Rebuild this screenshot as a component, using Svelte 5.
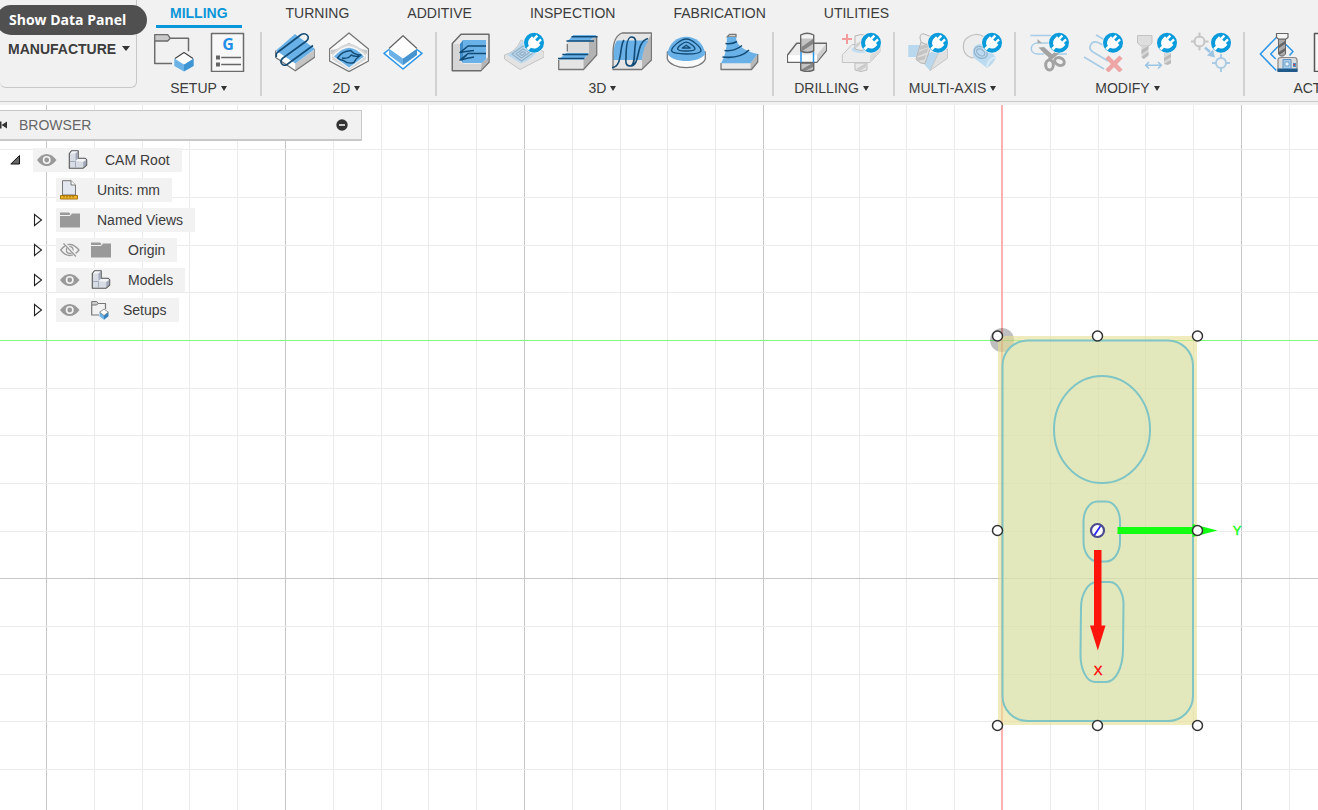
<script>
  const tabs = ['MILLING', 'TURNING', 'ADDITIVE', 'INSPECTION', 'FABRICATION', 'UTILITIES'];
  let activeTab = $state('MILLING');

  const groups = [
    { label: 'SETUP', tools: ['New Setup', 'NC Program'] },
    { label: '2D', tools: ['Face', '2D Adaptive', '2D Contour'] },
    { label: '3D', tools: ['Pocket Clearing', 'Steep and Shallow', 'Flat', 'Parallel', 'Scallop', 'Ramp'] },
    { label: 'DRILLING', tools: ['Drill', 'Hole Recognition'] },
    { label: 'MULTI-AXIS', tools: ['Swarf', 'Rotary'] },
    { label: 'MODIFY', tools: ['Trim', 'Delete Passes', 'Replace Tool', 'Move Entry'] },
    { label: 'ACTIONS', tools: ['Simulate', 'Post Process', 'Setup Sheet'] }
  ];

  const nodes = [
    { label: 'CAM Root', root: true, toggle: 'open', icons: ['eye', 'body'] },
    { label: 'Units: mm', icons: ['units'] },
    { label: 'Named Views', toggle: 'closed', icons: ['folder'] },
    { label: 'Origin', toggle: 'closed', icons: ['hidden', 'folder'] },
    { label: 'Models', toggle: 'closed', icons: ['eye', 'body'] },
    { label: 'Setups', toggle: 'closed', icons: ['eye', 'setups'] }
  ];

  // Grid lines are measured in cells from the work origin.
  const line = (index, cell) => Math.round(index * cell) + 0.5;
  const columns = Array.from({ length: 62 }, (_, i) => i - 41);
  const rows = Array.from({ length: 40 }, (_, i) => i - 5);
  const handles = [
    [-4.5, -4], [95.5, -4], [195.5, -4],
    [-4.5, 190.5], [195.5, 190.5],
    [-4.5, 385.5], [95.5, 385.5], [195.5, 385.5]
  ];
</script>

{#snippet plug()}
  <circle cx="30" cy="10.7" r="10.6" fill="#f1f1f1" />
  <circle cx="30" cy="10.7" r="10" fill="#0a9bdc" />
  <g transform="translate(29.500 11.200) rotate(45)" fill="#fff">
    <rect x="-3.8" y="-8" width="2.4" height="5.500" />
    <rect x="1.4" y="-8" width="2.4" height="5.500" />
    <path d="M-6-3.800h12v2.300c0 3.800-2.300 6-4.500 6.500v3.700h-3v-3.700c-2.200-.500-4.500-2.700-4.500-6.500z" />
  </g>
{/snippet}

{#snippet crosshair(x, y, color)}
  <g transform="translate({x} {y})" fill="none" stroke={color} stroke-width="2">
    <circle r="5" />
    <path d="M0-9v5M0 4v5M-9 0h5M4 0h5" />
  </g>
{/snippet}

{#snippet toolIcon(name)}
  <svg viewBox="0 0 40 40" width="40" height="40" aria-hidden="true" stroke-linejoin="round">
    {#if name === 'New Setup'}
      <path d="M.7 9v22.500H18M16 6.300h18.500v13" fill="none" stroke="#6b6b6b" stroke-width="1.500" />
      <path d="M.7 2.700h13l2.600 3.600L13.700 9H.7z" fill="#c9c9c9" stroke="#6b6b6b" stroke-width="1.300" />
      <path d="M20.300 26.500 30 32.500v7l-9.700-5.500z" fill="#6bb2e6" />
      <path d="M39.700 26.500 30 32.500v7l9.700-5.500z" fill="#3f95d3" />
      <path d="M30 20.500l9 6-9 5.800-9-5.800z" fill="#fff" />
      <path d="M21 26.500l9-6 9 6" fill="none" stroke="#444" stroke-width="1.200" />
    {:else if name === 'NC Program'}
      <rect x="3.500" y="1.500" width="32" height="38" fill="#f8f8f8" stroke="#6b6b6b" stroke-width="1.500" />
      <text x="20" y="18" text-anchor="middle" font-family="Open Sans, sans-serif" font-weight="700" font-size="16" fill="#1f8fe8">G</text>
      <path d="M13.200 25.500H33M13.200 32.500H33" stroke="#666" stroke-width="1.500" />
      <path d="M8 23.500h4v4H8zM8 30.500h4v4H8z" fill="#666" />
    {:else if name === 'Face'}
      <path d="M.7 18.500 20.300 31.500v7.800L.7 25.500z" fill="#fff" />
      <path d="M40 17.500 20.300 31.500v7.800L40 25z" fill="#c4c4c4" />
      <path d="M.7 18.500v7l19.600 13.300L40 25v-8" fill="none" stroke="#777" stroke-width="1.300" />
      <path d="M1 18.500 20 2l20 15-19.700 14.500z" fill="#6ab1e7" />
      <path d="M1.300 25V22.500Q1.300 21 3 20L25.500 3C31-.5 36 5 31.500 9L8 26c-4.500 3.500-.5 9.500 4 6.500L38 13.500" fill="none" stroke="#124b75" stroke-width="1.600" />
    {:else if name === '2D Adaptive'}
      <path d="M20 1 39.500 17v12L20 39.500.5 29V17z" fill="#fafafa" stroke="#777" stroke-width="1.400" />
      <path d="M2 18Q11 17 20 10.500q9 6.500 18 7.500v4Q27 20 20 14q-7 6-18 8z" fill="#c8c8c8" />
      <path d="M20 11.500q7 0 17 10v6L20 38 3 27.500v-6q10-10 17-10z" fill="#d8d8d8" />
      <path d="M20 14q7 0 17 10L20 37 3 24q10-10 17-10z" fill="#f6f6f6" />
      <path d="M5 24.500Q13 16 20 15.700q7 .3 15 8.800L20 35.500z" fill="#6ab1e7" />
      <path d="M8.500 26Q13 19 22 18.500q2 4 10 4.500-5 3-7 7.500-6 2-10.500-2-3.500-.5-6-2.500zM13 26q7 1 9-3 4 2 8 1" fill="none" stroke="#124b75" stroke-width="1.400" />
    {:else if name === '2D Contour'}
      <path d="M6 17.500 1 21.300 20 37l19-15.700-5-3.800" fill="#fff" stroke="#2b95e6" stroke-width="1.500" />
      <path d="M6 16.500 20 26.500v6.700L6 23z" fill="#6ab1e7" />
      <path d="M34 16.500 20 26.500v6.700L34 23z" fill="#4695d1" />
      <path d="M20 3.700 34 16.500l-14 9.800L6 16.500z" fill="#fff" />
      <path d="M6 16.500 20 3.700l14 12.800" fill="none" stroke="#666" stroke-width="1.300" />
    {:else if name === 'Pocket Clearing'}
      <path d="M2.300 11.500 11 2.300h28v28L30.700 38.700H2.300z" fill="#e9e9e9" stroke="#6b6b6b" stroke-width="1.500" />
      <path d="M3 12h7v18l4 2H31v6H3z" fill="#d5d5d5" />
      <path d="M31.500 31 38.300 25v5l-7.300 8z" fill="#b4b4b4" />
      <path d="M13 8h23v19l-4 4H13z" fill="#6ab1e7" />
      <path d="M13 8v23l-3-4V12z" fill="#3f8bc7" />
      <path d="M36 14H18l-8 6.500q8-1.500 14-2M36 21.500H18L10 28q8-2 14-3M12 19l5-4M12 27l5-4" fill="none" stroke="#124b75" stroke-width="1.500" />
    {:else if name === 'Steep and Shallow'}
      <path d="M.5 23Q12 20 17 8l23 12v5L16 37.500.5 27z" fill="#e3e3e3" stroke="#c4c4c4" />
      <path d="M3 22.500Q13 19 18 9l17 9q-8 10-18 13.500z" fill="#b9d8ee" />
      <path d="M8 22l11-8 11 6-12.500 9zM12 22l7-5 6.500 3.500-8 5.500zM15.500 22l3.500-2.500 2.500 1.500-3.500 2.500z" fill="none" stroke="#93afc4" stroke-width="1.100" />
      {@render plug()}
    {:else if name === 'Flat'}
      <path d="M.7 27.500h25v10H.7z" fill="#e5e5e5" />
      <path d="M9.300 10H31v11H9.300z" fill="#dcdcdc" />
      <path d="M31 9.500 38.700 4v19L25.500 37.500v-10l5.500-6z" fill="#b3b3b3" />
      <path d="M.7 28v9.500h24.800L38.700 23V4M9.300 12v7.500" fill="none" stroke="#777" stroke-width="1.300" />
      <path d="M9.300 9.500l6-6.500h23.400L31 9.500zM.7 27.500l7.600-6.500H31l-5.500 6.500z" fill="#6ab1e7" />
      <path d="M13.500 4.700h26M8.500 9h27.500M4.300 22.500h26M0 26.500h26.300" stroke="#124b75" stroke-width="1.500" />
    {:else if name === 'Parallel'}
      <path d="M1 37.500V20Q1.500 4 10 1h29.500v27L29.700 37.500z" fill="#e5e5e5" />
      <path d="M30 28Q31 13 39.500 2v26L30 37.500z" fill="#b7b7b7" />
      <path d="M1 28Q1 14 5 8.500h31.500Q31 16 30 28z" fill="#6ab1e7" />
      <path d="M1 37.500V20Q1.500 4 10 1h29.500v27L29.700 37.500z" fill="none" stroke="#777" stroke-width="1.300" />
      <path d="M0 35.500C11 35 7 14 12 8M14 27C14 14 15 5 19.500 5S24 9 23 15c-1 9 0 19-4.500 19S13.500 31 14 26M19 34C29 33 23 10 36 6.500" fill="none" stroke="#124b75" stroke-width="1.600" />
    {:else if name === 'Scallop'}
      <path d="M1.300 20v7c2 5 10 8.700 19 8.700s17-3.700 19-8.700v-7z" fill="#fafafa" stroke="#777" stroke-width="1.300" />
      <path d="M1.300 22C3 11 11 4.700 20.300 4.700S37.700 11 39.300 22C36 26.500 29 29 20.300 29S4.500 26.500 1.300 22z" fill="#6ab1e7" />
      <path d="M20.300 7c6 0 14.700 8.500 14.700 11.500 0 2.500-7 3.500-14.700 3.500S5.600 21 5.600 18.500C5.600 15.500 14.300 7 20.300 7zM20.300 10.200c3 0 8.700 4.800 8.700 6.500s-4 2.300-8.700 2.300-8.700-.6-8.700-2.300 5.700-6.500 8.700-6.500zM20.300 13.200l4 2.800h-8z" fill="none" stroke="#124b75" stroke-width="1.300" />
    {:else if name === 'Ramp'}
      <path d="M1 31h29.500v6.500H1z" fill="#e8e8e8" />
      <path d="M30.500 31l7.200-9v8l-6 7.500h-1.200z" fill="#b7b7b7" />
      <path d="M7 5 9.500 2.500H16V5zM1 31v6.500h30.500L37.700 30v-8" fill="none" stroke="#777" stroke-width="1.300" />
      <path d="M7 5h9Q16 17 37.700 22l-7.200 9.200H1Q7 22 7 5z" fill="#6ab1e7" />
      <path d="M5.500 11.500Q12 12.500 17 9.500M4.500 18.500Q14 20 22 13.500M2.500 25Q20 27 29 18" fill="none" stroke="#124b75" stroke-width="1.600" />
    {:else if name === 'Drill'}
      <path d="M.5 23 9.700 11.300h30v7L29.700 30.300H.5z" fill="#ececec" stroke="#666" stroke-width="1.500" />
      <path d="M1.200 23.200H30v6.400H1.200z" fill="#fff" />
      <path d="M30 23 39 12v6l-9 11.500z" fill="#cdcdcd" />
      <path d="M13.700 19V3q6.500-3.500 13 0v16q-6.500 3-13 0zM13.700 31h13v7q-6.500 3-13 0z" fill="#c4c4c4" stroke="#666" stroke-width="1.400" />
      <path d="M14.500 3.500q5.800-2.500 11.500 0v3H14.500z" fill="#f2f2f2" />
      <path d="M14.500 15 26 7v5l-11.500 7.500zM14.500 37.500 26 31v4l-8 4z" fill="#858585" />
      <path d="M14 20v10.500M26.500 20v10.500" stroke="#2b95e6" stroke-width="1.500" />
    {:else if name === 'Hole Recognition'}
      <path d="M14 31h12v7q-6 3-12 0z" fill="#e8e8e8" stroke="#bbb" />
      <path d="M15 37l10-6v4l-6 4z" fill="#ccc" />
      <path d="M1.300 23 11 12.500h28v7L29 30.500H1.300z" fill="#ececec" stroke="#c4c4c4" />
      <path d="M29 23.500 39 13v6l-10 11z" fill="#dadada" />
      <ellipse cx="19.500" cy="17.500" rx="9" ry="3.500" fill="#c3def1" />
      <path d="M14 17V4q6-3 12 0v13q-6 3-12 0z" fill="#eee" stroke="#b5b5b5" />
      <path d="M15 16l6-5V8l-6 4z" fill="#d0d0d0" />
      <path d="M1 7h10M6 2v10" stroke="#f39a9a" stroke-width="2" />
      {@render plug()}
    {:else if name === 'Swarf'}
      <path d="M.3 13H13v12H.3zM20 22l11-6v8l-9 14.700L14 30z" fill="#b9d8ee" />
      <path d="M22 38.700 31 20l8.700-3v9z" fill="#e0e0e0" stroke="#c6c6c6" />
      <path d="M13 10l7-1.500 4 3-7 20q-4 1-9-4z" fill="#dedede" stroke="#b5b5b5" />
      <path d="M10.500 20l10-4-1.500 4.500-10 4zM12.500 14l10-3-1.500 4-10 3.500zM8.500 26l9.500-3-1.500 4.500-7 1.500z" fill="#c4c4c4" />
      <path d="M12 6q0-5 4-4l8 3-2 7q-5 1-9-2z" fill="#eee" stroke="#b5b5b5" />
      {@render plug()}
    {:else if name === 'Rotary'}
      <path d="M6 24C0 20 0 10 5 6s12-5 17-1l4 14-16 7z" fill="#ededed" stroke="#c0c0c0" stroke-width="1.200" />
      <path d="M13 14q5-4 10 0l11 11q-2 7-9 11L12 26q-3-6 1-12z" fill="#bcdaf0" />
      <path d="M25 35q1-8 9-10" fill="none" stroke="#d8ebf7" stroke-width="2" />
      <g fill="none" stroke="#8fb0c7" stroke-width="1.200" transform="rotate(35 19 20)">
        <ellipse cx="19" cy="20.500" rx="7" ry="5.500" />
        <ellipse cx="19" cy="20.500" rx="4.500" ry="3" />
      </g>
      {@render plug()}
    {:else if name === 'Trim'}
      <path d="M1.300 3.500H22M21 11H9c-9 0-9 11 0 11h6M28 22h10" fill="none" stroke="#a9cce6" stroke-width="1.500" />
      <path d="M8.500 7v4H13z" fill="#aaa" />
      <path d="M9.500 15.500 15 15l10 9-2 4q-7-5-13.500-12.500zM29 17l3 3-11 9-2-3z" fill="#a3a3a3" />
      <ellipse cx="20.500" cy="33" rx="3.800" ry="5" fill="none" stroke="#a3a3a3" stroke-width="3" />
      <ellipse cx="30.500" cy="29.500" rx="5" ry="3.700" transform="rotate(25 30.500 29.500)" fill="none" stroke="#a3a3a3" stroke-width="3" />
      {@render plug()}
    {:else if name === 'Delete Passes'}
      <path d="M1 25 21 37M13 3l9 5M20 13l-5-2.500C8 8 4 16 10 20l15 9" fill="none" stroke="#a9cce6" stroke-width="1.700" />
      <path d="M24 25l14 14M38 25 24 39" stroke="#eda5a5" stroke-width="4.500" />
      {@render plug()}
    {:else if name === 'Replace Tool'}
      <path d="M.5 3.500H15V11l-3 3H4l-3.500-3z" fill="#dedede" stroke="#c4c4c4" />
      <path d="M4.500 14h7v10l-4 3-3-2z" fill="#d6d6d6" />
      <path d="M4.500 18l7-4v3l-7 5zM4.500 25l7-5v3l-5 4z" fill="#b9b9b9" />
      <path d="M27 20h7v12h-7z" fill="#d6d6d6" />
      <path d="M27 26l7-4v3l-7 4zM27 32l7-4v3l-3 2z" fill="#b9b9b9" />
      <path d="M9 33.300h15.500M12 30l-3.500 3.300L12 36.500M21 30l3.500 3.300L21 36.500" fill="none" stroke="#9cc5e4" stroke-width="1.500" />
      {@render plug()}
    {:else if name === 'Move Entry'}
      {@render crosshair(8.5, 9.5, '#c6c6c6')}
      {@render crosshair(30, 31, '#a9cbe3')}
      <path d="M14 15.500l5 4.500" stroke="#9cc5e4" stroke-width="2.500" />
      <path d="M24 25.500l-8-2 6-6z" fill="#9cc5e4" />
      {@render plug()}
    {:else if name === 'Simulate'}
      <path d="M18.300 5.500 2.300 22l16 16.500M20 14.500 12.700 22l5 5M28 12.500l7 7-3.500 4" fill="none" stroke="#2b95e6" stroke-width="1.500" />
      <path d="M20.500 7h7v15l-2 2h-3l-2-2z" fill="#ababab" stroke="#666" />
      <path d="M21 13l6-4v3l-6 4zM21 20l6-4v3l-6 4z" fill="#666" />
      <path d="M18.500 1.500H30v4L28 7h-7.500l-2-1.500z" fill="#f5f5f5" stroke="#666" stroke-width="1.200" />
      <path d="M20 39V28q0-2.500 3-2.500h13q3 0 3 2.500v11z" fill="#dcdcdc" stroke="#888" stroke-width="1.200" />
      <path d="M19.500 36.500h20V40h-20z" fill="#1f5a8a" />
      <path d="M25 27.500h8v9h-8z" fill="#a9cdea" stroke="#5b94c4" />
      <path d="M27 30h4v4h-4z" fill="#e8f3fb" stroke="#5b94c4" stroke-width=".8" />
      <path d="M35 31h3v4h-3z" fill="#4d8fc4" />
      <path d="M35.500 32h1.500v1.500h-1.500z" fill="#d33" />
    {:else}
      <path d="M2.500 1.500h30v38h-30z" fill="#f8f8f8" stroke="#555" stroke-width="1.500" />
      <path d="M8 12h17M8 20h17M8 28h17" stroke="#666" stroke-width="1.500" />
    {/if}
  </svg>
{/snippet}

{#snippet nodeIcon(name)}
  <svg viewBox="0 0 20 20" width="20" height="20" aria-hidden="true" stroke-linejoin="round">
    {#if name === 'eye'}
      <path d="M0 10Q4.500 4 9.700 4t9.800 6q-4.500 6-9.800 6T0 10z" fill="#999" />
      <circle cx="9.700" cy="10" r="3.200" fill="#999" stroke="#f4f4f4" stroke-width="1.600" />
    {:else if name === 'hidden'}
      <path d="M.7 10Q5 4.500 9.700 4.500T19 10Q14.500 15.500 9.700 15.500T.7 10z" fill="none" stroke="#999" stroke-width="1.300" />
      <circle cx="9.700" cy="10" r="3.300" fill="none" stroke="#999" stroke-width="1.300" />
      <path d="M4 3l13 14" stroke="#f1f1f1" stroke-width="3" />
      <path d="M3.500 3.500l12.500 13" stroke="#999" stroke-width="1.300" />
    {:else if name === 'folder'}
      <path d="M0 2.500h9l1.500 1.500-1 1H0zM0 6h10l2-2.500h8.500v14H0z" fill="#999" />
    {:else if name === 'body'}
      <path d="M1.300 3.500 3.500.8h6.700v7.500h7l1.500 1.500v5.200l-3.500 3.200H1.300z" fill="#d8dce5" stroke="#555" stroke-width="1.100" />
      <path d="M2 3.600 3.900 1.400h5.700L7.500 3.600zM7.700 11l2.500-2h7l.8.900-2.800 1.900z" fill="#f3f5f8" />
      <path d="M7.500 3.600l2.200-2v7L7.500 11zM15.200 12l3-1.900v4.700l-3 2.800z" fill="#a2aaba" />
      <path d="M1.800 11.500h5.700v6" fill="none" stroke="#a2aaba" />
    {:else if name === 'units'}
      <path d="M2.500 15V.7h8.500L15.500 5v10z" fill="#e3e7ef" stroke="#777" />
      <path d="M11 .7V5h4.500" fill="#fff" stroke="#777" />
      <path d="M.5 15.500h17v3.500H.5z" fill="#f0b429" stroke="#a8760f" />
      <path d="M4 16v1.500M7 16v1.500M10 16v1.500M13 16v1.500" stroke="#8a5c08" />
    {:else}
      <path d="M.7 5v10H8M6.500 3.500h8V9" fill="none" stroke="#777" stroke-width="1.200" />
      <path d="M.7 1.500h5l1.500 2L5.700 5h-5z" fill="#ccc" stroke="#777" />
      <path d="M8.500 12 13 15.500v4.300l-4.500-3.500z" fill="#6bb2e6" />
      <path d="M17.500 12 13 15.500v4.300l4.500-3.500z" fill="#3483c0" />
      <path d="M13 9l4.300 3.200L13 15.500l-4.300-3.300z" fill="#fff" stroke="#777" stroke-width=".8" />
    {/if}
  </svg>
{/snippet}

<div class="app">
  <header>
    <div class="workspace">
      <button class="switcher">MANUFACTURE <i class="caret"></i></button>
      <span class="tooltip" role="tooltip">Show Data Panel</span>
    </div>
    <div class="ribbon">
      <nav>
        {#each tabs as tab}
          <button class="tab" class:active={tab === activeTab} onclick={() => (activeTab = tab)}>{tab}</button>
        {/each}
      </nav>
      <div class="groups">
        {#each groups as group}
          <section>
            <div class="tools">
              {#each group.tools as tool}
                <button class="tool" aria-label={tool}>{@render toolIcon(tool)}</button>
              {/each}
            </div>
            <button class="menu">{group.label}<i class="caret"></i></button>
          </section>
        {/each}
      </div>
    </div>
  </header>

  <main>
    <svg class="canvas" aria-hidden="true">
      <g transform="translate(1002 235)">
        <g shape-rendering="crispEdges">
          {#each columns as c}
            <path d="M{line(c, 47.8)}-300v3000" stroke={c % 5 ? '#ebebeb' : '#c6c6c6'} />
          {/each}
          {#each rows as r}
            <path d="M-1100 {line(r, 47.65)}h3600" stroke={r % 5 ? '#ebebeb' : '#c6c6c6'} />
          {/each}
          <path d="M-1100 .5h3600" stroke="#7dff7d" />
          <path d="M0-300v3000" stroke="#ffb0b0" stroke-width="2" />
        </g>

        <circle r="12" fill="#000" fill-opacity=".25" />
        <rect x="-4" y="-4" width="199" height="389" fill="#e5df94" fill-opacity=".62" />
        <g stroke="#7fc5c5" stroke-width="2" fill="none">
          <rect x=".5" y=".5" width="190.500" height="380.500" rx="25" fill="#cfe2b9" fill-opacity=".42" />
          <ellipse cx="100" cy="89.500" rx="48" ry="53.500" />
          <rect x="81.500" y="161.500" width="36.500" height="60" rx="14" ry="20" />
          <path d="M95 242h13c8 0 13.500 12 13.500 22l-.5 45c0 18-7 33-17 33H93c-9 0-14.500-14-14.500-27l.5-47c0-14 7-26 16-26z" />
        </g>

        <path d="M115.500 187h75v-3l25 6.500-25 6.500v-3h-75z" fill="#12ff12" />
        <path d="M92 210h7.500v75.500h4l-7.700 25-7.800-25h4z" fill="#ff140c" />
        <text x="235" y="195" class="axis" fill="#12ff12" stroke="#12ff12">Y</text>
        <text x="96" y="335" class="axis" fill="#f00" stroke="#f00">X</text>

        {#each handles as [x, y]}
          <circle cx={x} cy={y} r="5" fill="#fff" stroke="#333" stroke-width="1.500" />
        {/each}
        <circle cx="95.500" cy="190.500" r="6.500" fill="#fff" stroke="#4a4a8c" stroke-width="2.200" />
        <path d="M92.500 195l6-9" stroke="#22f" stroke-width="1.700" />
      </g>
    </svg>

    <aside>
      <div class="title">
        <button class="collapse" aria-label="Collapse browser">
          <svg viewBox="0 0 8 10" width="8" height="10"><path d="M0 1.500h1.500v7H0zM1.500 5 7 1.500v7z" fill="#333" /></svg>
        </button>
        <h2>BROWSER</h2>
        <button class="minimise" aria-label="Minimise browser">
          <svg viewBox="0 0 12 12" width="12" height="12"><circle cx="6" cy="6" r="5.700" fill="#333" /><path d="M3 6h6" stroke="#fff" stroke-width="1.500" /></svg>
        </button>
      </div>
      <ul>
        {#each nodes as node}
          <li class:root={node.root}>
            <button class="toggle" disabled={!node.toggle} aria-label="Toggle {node.label}">
              {#if node.toggle === 'open'}
                <svg viewBox="0 0 10 14" width="10" height="14"><path d="M9.500 2.500v8.500H.8z" fill="#666" stroke="#111" /></svg>
              {:else if node.toggle}
                <svg viewBox="0 0 10 14" width="10" height="14"><path d="M1.500 1.500v11L8.500 7z" fill="#fff" stroke="#222" stroke-width="1.100" /></svg>
              {/if}
            </button>
            <div class="chip">
              {#each node.icons as icon}
                <span class="cell" class:narrow={icon === 'setups'}>{@render nodeIcon(icon)}</span>
              {/each}
              <span class="name">{node.label}</span>
            </div>
          </li>
        {/each}
      </ul>
    </aside>
  </main>
</div>

<style>
  :global(body) {
    margin: 0;
    overflow: hidden;
  }
  .app {
    display: flex;
    flex-direction: column;
    height: 100vh;
    font: 14px/16px 'Liberation Sans', Arial, sans-serif;
    color: #3c3c3c;
    background: #fff;
  }
  button {
    padding: 0;
    border: 0;
    background: none;
    font: inherit;
    color: inherit;
  }
  svg {
    display: block;
  }
  header {
    display: flex;
    position: relative;
    z-index: 1;
    background: #f1f1f1;
    border-bottom: 3px solid #f1f1f1;
    box-shadow: inset 0 -1px #c8c8c8;
  }
  .workspace {
    position: relative;
    flex: none;
    width: 137px;
    margin-right: 4px;
  }
  .switcher {
    display: flex;
    gap: 6px;
    align-items: center;
    box-sizing: border-box;
    width: 100%;
    height: 88px;
    padding: 10px 0 0 8px;
    border: 1px solid #c8c8c8;
    border-width: 0 1px 1px 0;
    border-radius: 0 0 6px 6px;
    font-weight: 700;
    white-space: nowrap;
  }
  .tooltip {
    position: absolute;
    top: 5px;
    left: -4px;
    padding: 0 21px 0 13px;
    border-radius: 15px;
    background: #505050;
    color: #fff;
    font: 700 14px/30px 'Open Sans', sans-serif;
    white-space: nowrap;
  }
  .caret {
    display: inline-block;
    border: 3px solid transparent;
    border-top: 5px solid #333;
    border-bottom: 0;
  }
  .switcher .caret {
    border-width: 5px 4px 0;
  }
  .ribbon {
    flex: 1;
    min-width: 0;
    overflow: hidden;
  }
  nav {
    display: flex;
    gap: 30px;
    padding-left: 15px;
  }
  .tab {
    padding: 1px 14px 0;
    border-bottom: 3px solid transparent;
    line-height: 24px;
  }
  .tab.active {
    color: #0a96d8;
    border-color: #0a96d8;
    font-weight: 700;
  }
  .groups {
    display: flex;
    padding: 4px 0 6px;
  }
  section {
    display: flex;
    flex: none;
    flex-direction: column;
    gap: 8px;
    align-items: center;
    padding: 0 5px 0 6px;
    border-right: 2px solid #d2d2d2;
  }
  .tools {
    display: flex;
  }
  .tool {
    display: flex;
    justify-content: center;
    width: 54px;
  }
  .menu {
    display: flex;
    gap: 4px;
    align-items: center;
    padding-right: 5px;
  }
  main {
    position: relative;
    flex: 1;
    min-height: 0;
  }
  .canvas {
    position: absolute;
    inset: 0;
    width: 100%;
    height: 100%;
  }
  .axis {
    font-size: 13px;
    text-anchor: middle;
    stroke-width: 0.4px;
  }
  aside {
    position: relative;
    width: 362px;
    padding-top: 5px;
  }
  .title {
    display: flex;
    align-items: center;
    height: 28px;
    padding-right: 13px;
    border: 1px solid #c8c8c8;
    border-width: 1px 1px 2px 0;
    background: #f1f1f1;
  }
  .collapse {
    width: 19px;
  }
  h2 {
    flex: 1;
    margin: 0;
    font: inherit;
    color: #666;
  }
  ul {
    display: grid;
    gap: 6px;
    margin: 0;
    padding: 7px 0 0;
    list-style: none;
  }
  li {
    display: flex;
    align-items: center;
    padding-left: 33px;
  }
  li.root {
    padding-left: 10px;
  }
  .toggle {
    width: 23px;
  }
  .chip {
    display: flex;
    align-items: center;
    height: 24px;
    padding-right: 12px;
    background: #f2f2f2;
  }
  .cell {
    width: 27px;
    padding-left: 4px;
  }
  .narrow {
    width: 22px;
  }
  .name {
    padding-left: 10px;
  }
</style>
